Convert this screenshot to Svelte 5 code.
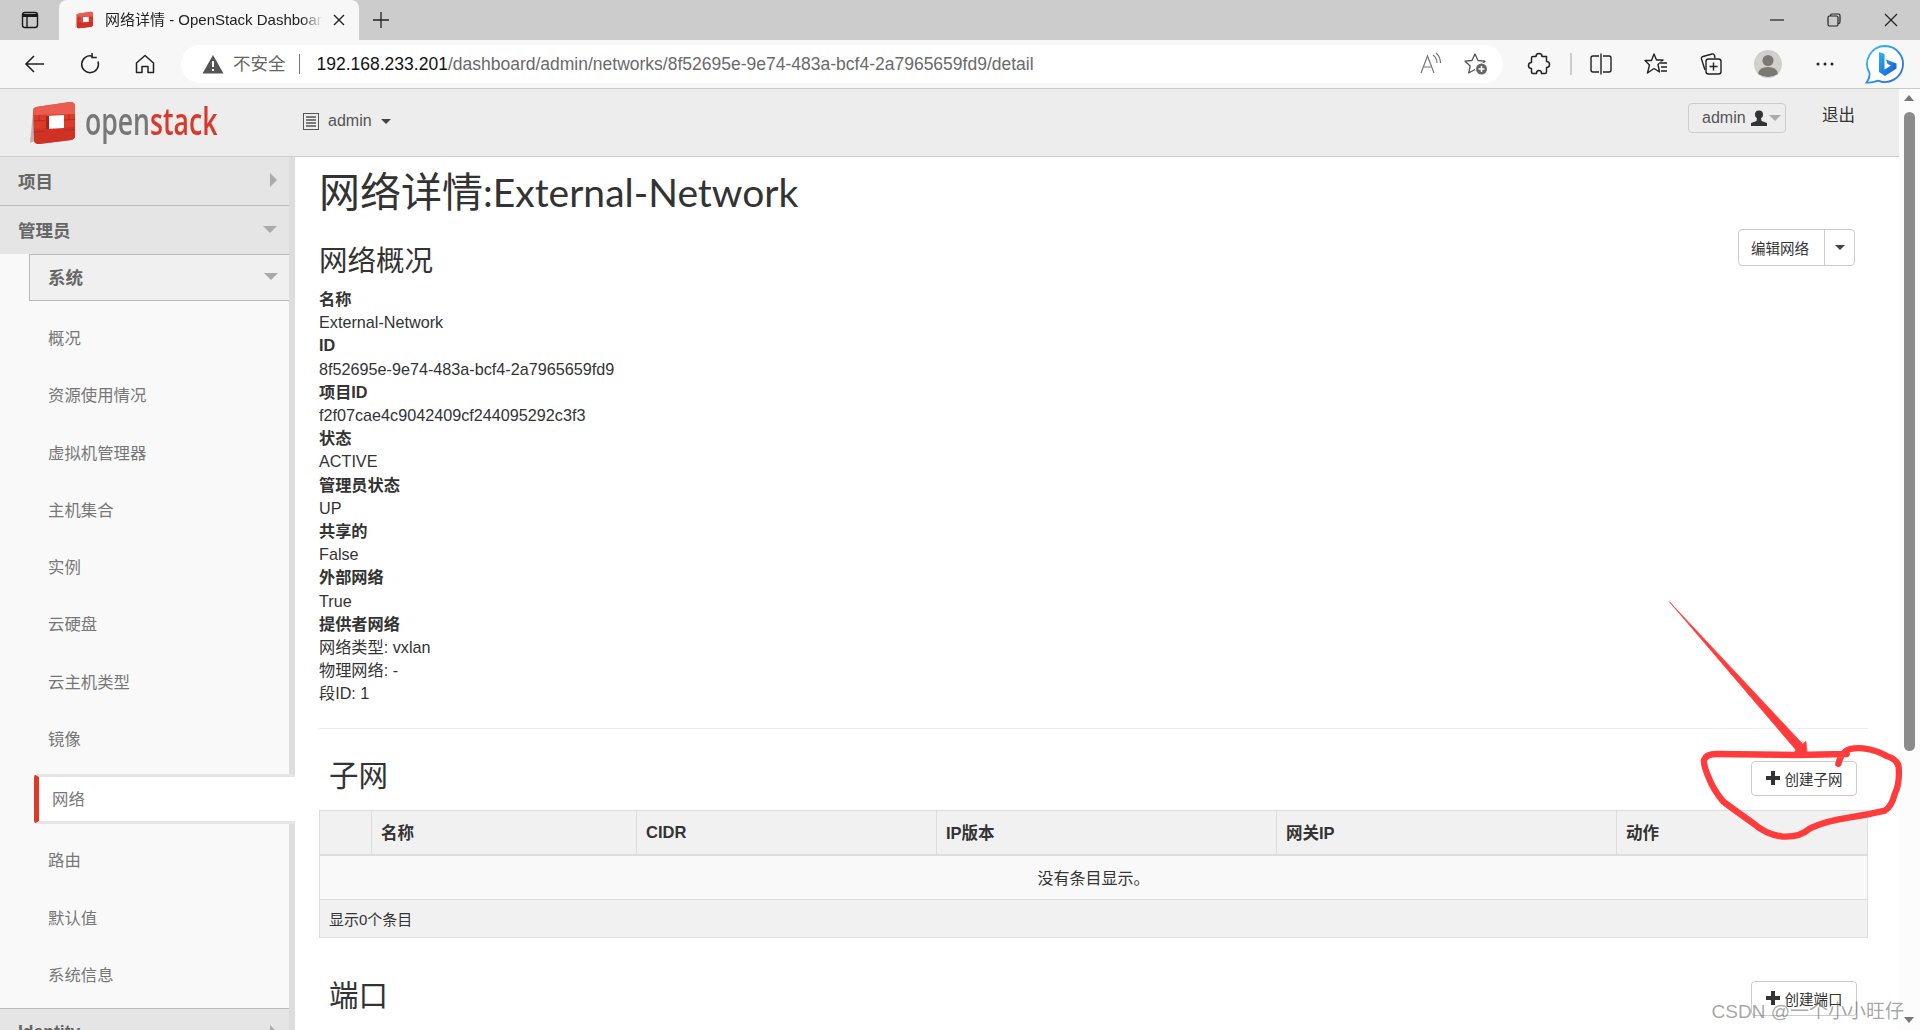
<script>
  const items = ["概况", "资源使用情况", "虚拟机管理器", "主机集合", "实例", "云硬盘", "云主机类型", "镜像"];
  const after = ["路由", "默认值", "系统信息"];
  const details = [
    ["名称", ["External-Network"]],
    ["ID", ["8f52695e-9e74-483a-bcf4-2a7965659fd9"]],
    ["项目ID", ["f2f07cae4c9042409cf244095292c3f3"]],
    ["状态", ["ACTIVE"]],
    ["管理员状态", ["UP"]],
    ["共享的", ["False"]],
    ["外部网络", ["True"]],
    ["提供者网络", ["网络类型: vxlan", "物理网络: -", "段ID: 1"]]
  ];
  const cols = ["", "名称", "CIDR", "IP版本", "网关IP", "动作"];
</script>

{#snippet cube(size)}
  <svg width={size} height={size} viewBox="0 0 46 46">
    <path d="M1 43L4 12L8 40Z" fill="#9a8a86" opacity=".6"/>
    <path d="M7 7L41 2Q46 2 46 6L46 36Q46 39 42 40L10 44Q5 44 5 40L4 11Q4 8 7 7Z" fill="#da3b2c"/>
    <path d="M7 7L41 2Q46 2 46 6L46 14L5 15L4 11Q4 8 7 7Z" fill="#ea5c50"/>
    <path d="M5 29L46 27L46 36Q46 39 42 40L10 44Q5 44 5 40Z" fill="#cf3224"/>
    <path d="M5 21L16 20.500M35 20L46 19.500M5 32L16 31.500M35 30L46 29.500M10 15V21M40 14V20" stroke="#b82a1c" stroke-width="1"/>
    <path d="M17 16L35 15L35 28L17 29Z" fill="#fff"/>
    <path d="M17 16L20 16V29L17 29Z" fill="#a8251a"/>
  </svg>
{/snippet}

{#snippet plusBtn(label)}
  <button class="btn add"><span class="plus"></span>{label}</button>
{/snippet}

{#snippet datatable()}
  <table>
    <colgroup>
      <col style="width:52px"/><col style="width:265px"/><col style="width:300px"/><col style="width:340px"/><col style="width:340px"/><col/>
    </colgroup>
    <thead>
      <tr>{#each cols as c}<th>{c}</th>{/each}</tr>
    </thead>
    <tbody>
      <tr><td class="empty" colspan="6">没有条目显示。</td></tr>
    </tbody>
    <tfoot>
      <tr><td colspan="6">显示0个条目</td></tr>
    </tfoot>
  </table>
{/snippet}

<div class="window">
  <div class="tabstrip">
    <svg class="tabactions" width="20" height="20" viewBox="0 0 20 20" fill="none" stroke="#1a1a1a" stroke-width="1.4">
      <rect x="2.5" y="2.5" width="15" height="15" rx="2.5"/>
      <path d="M2.5 5.500H17.5" stroke-width="3"/>
      <path d="M7 6.5V17.5"/>
    </svg>
    <div class="tab">
      <span class="favicon">{@render cube(18)}</span>
      <span class="tabtitle">网络详情 - OpenStack Dashboard</span>
      <svg width="14" height="14" viewBox="0 0 14 14" stroke="#222" stroke-width="1.4"><path d="M2 2L12 12M12 2L2 12"/></svg>
    </div>
    <svg class="newtab" width="18" height="18" viewBox="0 0 18 18" stroke="#222" stroke-width="1.3"><path d="M9 1V17M1 9H17"/></svg>
    <div class="winctl">
      <svg width="14" height="14" viewBox="0 0 14 14" stroke="#222" stroke-width="1.2"><path d="M0 7H14"/></svg>
      <svg width="14" height="14" viewBox="0 0 14 14" fill="none" stroke="#222" stroke-width="1.2"><rect x="1" y="3" width="10" height="10" rx="1.5"/><path d="M3.5 3V2.5Q3.5 1 5 1H11.5Q13 1 13 2.5V9Q13 10.5 11.5 10.5H11"/></svg>
      <svg width="14" height="14" viewBox="0 0 14 14" stroke="#222" stroke-width="1.2"><path d="M1 1L13 13M13 1L1 13"/></svg>
    </div>
  </div>

  <div class="toolbar">
    <div class="navbtns">
      <svg width="22" height="22" viewBox="0 0 22 22" fill="none" stroke="#222" stroke-width="1.6"><path d="M20 11H2M10 3L2 11L10 19"/></svg>
      <svg width="22" height="22" viewBox="0 0 22 22" fill="none" stroke="#222" stroke-width="1.5"><path d="M13.5 3.2A8.4 8.4 0 1 0 19 8.5"/><path d="M13 0V4.5H17.8" stroke-width="1.5"/></svg>
      <svg width="22" height="22" viewBox="0 0 22 22" fill="none" stroke="#222" stroke-width="1.5"><path d="M2.5 10L11 2.5L19.5 10V19.5H14V13.5H8V19.5H2.5Z" stroke-linejoin="round"/></svg>
    </div>
    <div class="address">
      <svg width="22" height="20" viewBox="0 0 22 20"><path d="M11 1L21.5 19.5H.5Z" fill="#555"/><path d="M11 7V13M11 15V17" stroke="#fff" stroke-width="2"/></svg>
      <span class="insecure">不安全</span>
      <span class="addr-sep"></span>
      <span class="url"><b>192.168.233.201</b>/dashboard/admin/networks/8f52695e-9e74-483a-bcf4-2a7965659fd9/detail</span>
      <span class="addr-spacer"></span>
      <svg class="readaloud" width="24" height="24" viewBox="0 0 24 24" fill="none" stroke="#777" stroke-width="1.2"><path d="M2 21L8.500 4L15 21M4.500 15H12.500"/><path d="M14 3Q18 6 18 11M17 1Q21.500 5 21.500 11"/></svg>
      <svg width="26" height="26" viewBox="0 0 26 26" fill="none" stroke="#555" stroke-width="1.3"><path d="M11 3L14 9.500L21 10.200L15.800 15L17.300 22L11 18.500L4.700 22L6.200 15L1 10.200L8 9.500Z" stroke-linejoin="round"/><circle cx="17.500" cy="18" r="6.500" fill="#fff" stroke="none"/><circle cx="17.500" cy="18" r="5.500" fill="#666" stroke="none"/><path d="M17.500 15V21M14.500 18H20.500" stroke="#fff" stroke-width="1.500"/></svg>
    </div>
    <div class="tools">
      <svg class="t-puzzle" width="24" height="24" viewBox="0 0 24 24" fill="none" stroke="#222" stroke-width="1.5"><path d="M9 4.500Q9 1.500 12 1.500Q15 1.500 15 4.500H19.500V9.500Q22.500 9.500 22.500 12.500Q22.500 15.500 19.500 15.500V20Q19.500 21.500 18 21.500H14.500Q14.500 18.500 12 18.500Q9.500 18.500 9.500 21.500H6Q4.500 21.500 4.500 20V16.500Q1.500 16.500 1.500 13.500Q1.500 10.500 4.500 10.500V6Q4.500 4.500 6 4.500Z" stroke-linejoin="round"/></svg>
      <span class="t-sep"></span>
      <svg class="t-split" width="24" height="24" viewBox="0 0 24 24" fill="none" stroke="#222" stroke-width="1.4"><path d="M10 4H4Q2 4 2 6V18Q2 20 4 20H10M14 4H20Q22 4 22 6V18Q22 20 20 20H14M12 1.500V22.500"/></svg>
      <svg class="t-fav" width="24" height="24" viewBox="0 0 24 24" fill="none" stroke="#222" stroke-width="1.4"><path d="M10 2L12.500 8H19L14 12.500L15.500 20L10 16.500L3.500 21L5.500 13L1 8.500H7.500Z" stroke-linejoin="round"/><path d="M15.500 11H23M17 15H23M17 19H23" stroke="#f7f7f7" stroke-width="3"/><path d="M15.500 11H23M17 15H23M17 19H23"/></svg>
      <svg class="t-coll" width="24" height="24" viewBox="0 0 24 24" fill="none" stroke="#222" stroke-width="1.4"><path d="M6 18L2.500 7Q2 5 4 4.500L13 2Q15 1.500 15.500 3.500L16 6"/><rect x="7" y="7" width="15" height="15" rx="2.500"/><path d="M14.500 10.500V18.500M10.500 14.500H18.500"/></svg>
      <span class="t-avatar"><svg width="28" height="28" viewBox="0 0 28 28"><circle cx="14" cy="14" r="14" fill="#d2d0cc"/><circle cx="14" cy="10.500" r="5.500" fill="#7b7874"/><path d="M4 24Q5 17 14 17Q23 17 24 24Q14 30 4 24Z" fill="#7b7874"/></svg></span>
      <svg class="t-more" width="18" height="4" viewBox="0 0 18 4" fill="#222"><circle cx="2" cy="2" r="1.500"/><circle cx="9" cy="2" r="1.500"/><circle cx="16" cy="2" r="1.500"/></svg>
      <svg class="t-bing" width="40" height="40" viewBox="0 0 40 40">
        <defs>
          <linearGradient id="bingb" x1="0" y1="0" x2="1" y2="1">
            <stop offset="0" stop-color="#2bb4f0"/>
            <stop offset="1" stop-color="#1a55d6"/>
          </linearGradient>
          <linearGradient id="bingr" x1="0" y1="0" x2="1" y2="1">
            <stop offset="0" stop-color="#35c1f1"/>
            <stop offset="1" stop-color="#2a5fe0"/>
          </linearGradient>
        </defs>
        <path d="M20 2A18 18 0 1 1 13 36.600Q7 39 1.500 38.500Q5 34.500 4.500 29A18 18 0 0 1 20 2Z" fill="#fff" stroke="url(#bingr)" stroke-width="1.800"/>
        <path d="M14 8L19.500 10V25.500L26 21.500L22.500 20L21 15.500L31.500 19.500V24.500L20 32L14 28Z" fill="url(#bingb)"/>
      </svg>
    </div>
  </div>

  <div class="page">
    <div class="content">
      <div class="appheader">
        <div class="brand">
          <span class="cube">{@render cube(46)}</span>
          <span class="wordmark">open<em>stack</em></span>
        </div>
        <div class="picker">
          <svg width="16" height="17" viewBox="0 0 16 17"><rect x=".5" y=".5" width="15" height="16" fill="#eee" stroke="#555"/><path d="M3 4H13M3 7H13M3 10H13M3 13H13" stroke="#555" stroke-width="1.400"/></svg>
          <span>admin</span>
          <i class="caret dark"></i>
        </div>
        <div class="userzone">
          <div class="userbtn">admin
            <svg width="16" height="16" viewBox="0 0 16 16" fill="#333"><circle cx="8" cy="4.500" r="4"/><path d="M6 8H10L10.500 11L16 13V16H0V13L5.500 11Z"/></svg>
            <i class="caret light"></i>
          </div>
          <span class="signout">退出</span>
        </div>
      </div>

      <div class="body">
        <nav class="sidebar">
          <div class="dash">项目<i class="arrow-right"></i></div>
          <div class="dash">管理员<i class="caret big"></i></div>
          <div class="panelgroup">系统<i class="caret big"></i></div>
          <ul>
            {#each items as item}<li>{item}</li>{/each}
            <li class="active">网络</li>
            {#each after as item}<li>{item}</li>{/each}
          </ul>
          <div class="dash identity">Identity<i class="arrow-right"></i></div>
        </nav>

        <main>
          <h1>网络详情<span>:External-Network</span></h1>
          <div class="overview-head">
            <h3>网络概况</h3>
            <div class="btn-group">
              <button class="btn">编辑网络</button>
              <button class="btn toggle"><i class="caret dark"></i></button>
            </div>
          </div>
          <dl>
            {#each details as [k, vals]}
              <dt>{k}</dt>
              {#each vals as v}<dd>{v}</dd>{/each}
            {/each}
          </dl>
          <hr/>
          <div class="section-head">
            <h3>子网</h3>
            {@render plusBtn("创建子网")}
          </div>
          {@render datatable()}
          <div class="section-head ports">
            <h3>端口</h3>
            {@render plusBtn("创建端口")}
          </div>
        </main>
      </div>
    </div>

    <div class="scrollbar">
      <i class="sb-up"></i>
      <div class="thumb"></div>
      <i class="sb-down"></i>
    </div>
  </div>

  <!-- annotation drawn over the shot, coords are from the crop around the button -->
  <svg class="scribble" width="1920" height="1030" viewBox="0 0 1920 1030">
    <g transform="translate(1620 580) scale(.3333)">
      <path d="M148 65L528 510L522 518L562 526L558 484L548 492Z" fill="#ff3b3b" stroke="#ff3b3b" stroke-width="2" stroke-linejoin="round"/>
      <path d="M655 552Q662 525 675 515Q690 502 730 505Q770 510 800 528Q832 538 836 560Q840 610 825 640Q815 680 795 692Q740 705 690 712Q620 722 570 745Q540 772 490 770Q440 765 400 730Q350 695 310 665Q280 630 265 590Q250 555 252 540Q258 522 290 522L530 525L680 522" fill="none" stroke="#ff3b3b" stroke-width="19" stroke-linecap="round" stroke-linejoin="round"/>
    </g>
  </svg>
  <div class="watermark">CSDN @一个小小旺仔</div>
</div>

<style>
  :global(body) {
    margin: 0;
    background: #fff;
    overflow: hidden;
  }

  .window {
    position: relative;
    width: 1920px;
    height: 1030px;
    overflow: hidden;
    display: flex;
    flex-direction: column;
    font-family: "Liberation Sans", "Noto Sans CJK SC", sans-serif;
    font-size: 16px;
    color: #333;
  }

  /* browser chrome */
  .tabstrip {
    height: 40px;
    flex: none;
    background: #ccc;
    display: flex;
    align-items: center;
  }
  .tabactions {
    margin-left: 20px;
    margin-right: 19px;
  }
  .tab {
    width: 300px;
    height: 40px;
    box-sizing: border-box;
    padding: 0 13px 0 16px;
    background: #f7f7f7;
    border-radius: 8px 8px 0 0;
    display: flex;
    align-items: center;
    font-size: 15px;
    line-height: 18px;
    color: #222;
  }
  .favicon {
    display: flex;
    margin-right: 12px;
  }
  .tabtitle {
    width: 218px;
    margin-right: 9px;
    white-space: nowrap;
    overflow: hidden;
    -webkit-mask-image: linear-gradient(90deg, #000 90%, transparent);
    mask-image: linear-gradient(90deg, #000 90%, transparent);
  }
  .newtab {
    margin-left: 13px;
  }
  .winctl {
    margin-left: auto;
    margin-right: 22px;
    display: flex;
    gap: 43px;
  }
  .toolbar {
    height: 49px;
    flex: none;
    box-sizing: border-box;
    background: #f7f7f7;
    border-bottom: 1px solid #c8c8c8;
    display: flex;
    align-items: center;
  }
  .navbtns {
    width: 181px;
    box-sizing: border-box;
    padding-left: 24px;
    display: flex;
    gap: 33px;
  }
  .address {
    width: 1322px;
    height: 38px;
    box-sizing: border-box;
    padding: 0 13px 0 21px;
    background: #fff;
    border-radius: 19px;
    display: flex;
    align-items: center;
    line-height: 22px;
  }
  .insecure {
    margin-left: 9px;
    font-size: 17.500px;
    color: #666;
  }
  .addr-sep {
    width: 1px;
    height: 20px;
    margin: 0 17px 0 13px;
    background: #777;
  }
  .url {
    font-size: 17.500px;
    color: #6a6a6a;
    white-space: nowrap;
  }
  .url b {
    font-weight: normal;
    color: #111;
  }
  .addr-spacer {
    flex: 1;
  }
  .readaloud {
    margin-right: 21px;
  }
  .tools {
    flex: 1;
    height: 47px;
    display: flex;
    align-items: center;
    padding-left: 24px;
  }
  .t-sep {
    width: 2px;
    height: 22px;
    background: #ccc;
    margin: 0 17px 0 19px;
  }
  .t-fav {
    margin-left: 31px;
  }
  .t-coll {
    margin-left: 31px;
  }
  .t-avatar {
    display: flex;
    margin-left: 31px;
  }
  .t-more {
    margin-left: 34px;
  }
  .t-bing {
    margin-left: 31px;
  }

  .page {
    flex: 1;
    min-height: 0;
    display: flex;
  }
  .content {
    flex: 1;
    min-width: 0;
    display: flex;
    flex-direction: column;
  }

  /* dashboard header */
  .appheader {
    height: 68px;
    flex: none;
    box-sizing: border-box;
    background: #ededed;
    border-bottom: 1px solid #ccc;
    display: flex;
    align-items: flex-start;
  }
  .brand {
    width: 303px;
    box-sizing: border-box;
    padding: 11px 0 0 29px;
    display: flex;
    align-items: center;
  }
  .cube {
    display: flex;
  }
  .wordmark {
    display: inline-block;
    margin: -7px 0 0 10px;
    font-family: "Open Sans", sans-serif;
    font-size: 38px;
    font-weight: 600;
    line-height: 42px;
    color: #777;
    transform: scaleX(0.7);
    transform-origin: left center;
    white-space: nowrap;
  }
  .wordmark em {
    font-style: normal;
    color: #d8392b;
  }
  .picker {
    display: flex;
    align-items: center;
    gap: 9px;
    padding-top: 23px;
    color: #555;
  }
  .userzone {
    margin-left: auto;
    padding: 14px 44px 0 0;
    display: flex;
  }
  .userbtn {
    width: 98px;
    height: 30px;
    box-sizing: border-box;
    padding-left: 13px;
    border: 1px solid #ccc;
    border-radius: 4px;
    display: flex;
    align-items: center;
    gap: 5px;
    color: #555;
  }
  .signout {
    margin-left: 36px;
    font-size: 16.500px;
    line-height: 24px;
    color: #333;
  }
  .caret {
    width: 0;
    height: 0;
    display: inline-block;
    border-style: solid;
    border-color: currentColor transparent transparent;
    border-width: 5px 5px 0;
  }
  .caret.dark {
    color: #444;
  }
  .caret.light {
    color: #aaa;
    border-width: 6px 6px 0;
    margin-left: -3px;
  }
  .caret.big {
    color: #aaa;
    border-width: 7px 7px 0;
  }
  .arrow-right {
    width: 0;
    height: 0;
    border-style: solid;
    border-color: transparent transparent transparent #aaa;
    border-width: 7px 0 7px 7px;
  }

  .body {
    flex: 1;
    min-height: 0;
    display: flex;
  }

  /* side nav */
  .sidebar {
    width: 295px;
    flex: none;
    box-sizing: border-box;
    background: #f9f9f9;
    border-right: 6px solid #ddd;
    font-size: 17.500px;
    color: #666;
  }
  .dash {
    height: 49px;
    box-sizing: border-box;
    padding: 0 12px 2px 18px;
    background: #e5e5e5;
    border-bottom: 1px solid #bbb;
    display: flex;
    align-items: center;
    justify-content: space-between;
    font-weight: bold;
  }
  .dash + .dash {
    height: 48px;
    border-bottom: 0;
  }
  .panelgroup {
    height: 47px;
    margin-left: 29px;
    box-sizing: border-box;
    padding: 0 11px 2px 18px;
    background: #f0f0f0;
    border: 1px solid #bbb;
    border-right: 0;
    display: flex;
    align-items: center;
    justify-content: space-between;
    font-weight: bold;
  }
  ul {
    list-style: none;
    margin: 0;
    padding: 8px 0 5px;
  }
  li {
    height: 57.300px;
    line-height: 58px;
    padding-left: 48px;
    font-size: 16.400px;
    color: #777;
  }
  li.active {
    box-sizing: border-box;
    height: 50px;
    line-height: 44px;
    margin: 7px -6px 7px 34px;
    padding-left: 13px;
    background: #fff;
    border: solid #e5e5e5;
    border-width: 3px 0;
    border-left: 5px solid #dc3a22;
    border-radius: 4px 0 0 4px;
  }
  .dash.identity {
    border-top: 1px solid #bbb;
    border-bottom: 0;
  }

  /* main column */
  main {
    flex: 1;
    min-width: 0;
    box-sizing: border-box;
    padding: 9px 31px 0 24px;
  }
  h1 {
    margin: 0 0 11px;
    font-family: Lato, "Noto Sans CJK SC", sans-serif;
    font-size: 41px;
    line-height: 52px;
    font-weight: 400;
    color: #333;
    white-space: nowrap;
  }
  h1 span {
    font-size: 39px;
  }
  h3 {
    margin: 0;
    font-weight: 400;
    color: #333;
    font-size: 28.500px;
    line-height: 36px;
  }
  .overview-head {
    display: flex;
    justify-content: space-between;
    align-items: flex-start;
    padding-right: 13px;
  }
  .overview-head h3 {
    margin-top: 14px;
  }
  .btn-group {
    display: flex;
  }
  .btn {
    height: 37px;
    box-sizing: border-box;
    padding: 0 12px;
    background: #fff;
    border: 1px solid #ccc;
    border-radius: 4px;
    font-family: inherit;
    font-size: 14.500px;
    color: #333;
    display: flex;
    align-items: center;
  }
  .btn-group .btn:first-child {
    width: 87px;
    border-radius: 4px 0 0 4px;
  }
  .btn.toggle {
    width: 31px;
    margin-left: -1px;
    justify-content: center;
    border-radius: 0 4px 4px 0;
  }
  dl {
    margin: 9px 0 0;
    font-size: 16.200px;
    line-height: 23.200px;
    color: #333;
  }
  dt {
    font-weight: bold;
  }
  dd {
    margin: 0;
  }
  hr {
    margin: 22px 0 0;
    border: 0;
    border-top: 1px solid #eee;
  }
  .section-head {
    height: 35px;
    padding: 32px 11px 14px 10px;
    display: flex;
    justify-content: space-between;
    align-items: center;
  }
  .section-head h3 {
    font-size: 29.500px;
    margin-top: -4px;
  }
  .section-head.ports {
    padding-top: 43px;
  }
  .add {
    width: 106px;
    height: 35px;
    justify-content: center;
  }
  .plus {
    width: 14px;
    height: 14px;
    margin-right: 5px;
    background:
      linear-gradient(#333, #333) center / 14px 4px no-repeat,
      linear-gradient(#333, #333) center / 4px 14px no-repeat;
  }
  table {
    width: 100%;
    table-layout: fixed;
    border-collapse: collapse;
    border: 1px solid #ddd;
  }
  th {
    height: 45px;
    box-sizing: border-box;
    padding: 0 9px;
    background: #f1f1f1;
    border: 1px solid #ddd;
    border-bottom-width: 2px;
    text-align: left;
    font-size: 16.500px;
  }
  td {
    height: 44px;
    box-sizing: border-box;
    padding: 0 9px;
    border-top: 1px solid #ddd;
  }
  td.empty {
    background: #f9f9f9;
    text-align: center;
  }
  tfoot td {
    height: 38px;
    background: #f1f1f1;
    font-size: 15px;
  }

  .scrollbar {
    width: 21px;
    flex: none;
    position: relative;
    background: #fcfcfc;
  }
  .thumb {
    position: absolute;
    left: 5px;
    top: 23px;
    width: 11px;
    height: 639px;
    background: #8b8b8b;
    border-radius: 6px;
  }
  .sb-up, .sb-down {
    position: absolute;
    left: 5px;
    width: 0;
    height: 0;
    border-style: solid;
    border-color: transparent;
  }
  .sb-up {
    top: 6px;
    border-width: 0 5px 6px;
    border-bottom-color: #777;
  }
  .sb-down {
    bottom: 7px;
    border-width: 6px 5px 0;
    border-top-color: #777;
  }

  /* things lying on top of the shot */
  .scribble {
    position: absolute;
    left: 0;
    top: 0;
    pointer-events: none;
  }
  .watermark {
    position: absolute;
    right: 16px;
    top: 999px;
    font-size: 19px;
    line-height: 26px;
    color: rgba(90, 90, 90, 0.55);
    white-space: nowrap;
  }
</style>
